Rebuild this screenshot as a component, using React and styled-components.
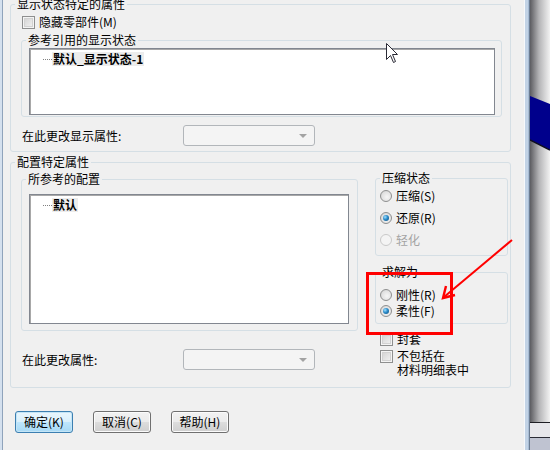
import React from "react";
import styled, { createGlobalStyle, css } from "styled-components";

const GlobalStyle = createGlobalStyle`
  html, body {
    margin: 0;
    padding: 0;
    background: #f0f0f0;
    overflow: hidden;
  }
  body {
    font-family: "Noto Sans CJK SC", "Noto Sans", sans-serif;
    font-size: 12px;
    color: #000;
  }
`;

function App() {
  return (
    <>
      <GlobalStyle />
      <Screen>
        <LeftEdge />
        <Dialog>
          <Group $top={-3}>
            <Legend>显示状态特定的属性</Legend>
            <GroupBody $pad="4px 8px 5px 10px">
              <CheckRow>
                <CheckBox />
                <span>隐藏零部件(M)</span>
              </CheckRow>
              <SubGroup $top={4}>
                <Legend>参考引用的显示状态</Legend>
                <ListBox $height={67} $margin="1px 6px 1px 7px">
                  <TreeItem>
                    <Dots />
                    <ItemText>默认_显示状态-1</ItemText>
                  </TreeItem>
                </ListBox>
              </SubGroup>
              <FieldRow $top={8}>
                <FieldLabel>在此更改显示属性:</FieldLabel>
                <Combo>
                  <ComboArrow />
                </Combo>
              </FieldRow>
            </GroupBody>
          </Group>

          <Group $top={3}>
            <Legend>配置特定属性</Legend>
            <Columns>
              <div>
                <SubGroup $top={3}>
                  <Legend>所参考的配置</Legend>
                  <ListBox $height={130} $margin="8px 8px 6px 7px">
                    <TreeItem>
                      <Dots />
                      <ItemText>默认</ItemText>
                    </TreeItem>
                  </ListBox>
                </SubGroup>
                <FieldRow $top={18}>
                  <FieldLabel>在此更改属性:</FieldLabel>
                  <Combo>
                    <ComboArrow />
                  </Combo>
                </FieldRow>
              </div>
              <div>
                <SubGroup $top={2}>
                  <Legend>压缩状态</Legend>
                  <OptionList $gap={8} $pad="4px 4px 8px">
                    <Option>
                      <Radio />
                      压缩(S)
                    </Option>
                    <Option>
                      <Radio $checked />
                      还原(R)
                    </Option>
                    <Option $disabled>
                      <Radio $disabled />
                      轻化
                    </Option>
                  </OptionList>
                </SubGroup>
                <SubGroup $top={9}>
                  <Legend>求解为</Legend>
                  <OptionList $gap={2} $pad="9px 4px 5px">
                    <Option>
                      <Radio />
                      刚性(R)
                    </Option>
                    <Option>
                      <Radio $checked />
                      柔性(F)
                    </Option>
                  </OptionList>
                </SubGroup>
                <CheckList>
                  <CheckRow>
                    <CheckBox />
                    <span>封套</span>
                  </CheckRow>
                  <CheckRow>
                    <CheckBox />
                    <span>
                      不包括在
                      <br />
                      材料明细表中
                    </span>
                  </CheckRow>
                </CheckList>
              </div>
            </Columns>
          </Group>

          <ButtonRow>
            <Button $default>确定(K)</Button>
            <Button>取消(C)</Button>
            <Button>帮助(H)</Button>
          </ButtonRow>
        </Dialog>
        <WindowEdge />
        <Viewport>
          <svg width="20" height="450" viewBox="0 0 20 450">
            <defs>
              <linearGradient id="vpg" x1="0" x2="1" y1="0" y2="0">
                <stop offset="0" stopColor="#5c5c60" />
                <stop offset="0.45" stopColor="#b4b4b6" />
                <stop offset="1" stopColor="#f2f2f2" />
              </linearGradient>
            </defs>
            <rect width="20" height="450" fill="url(#vpg)" />
            <polygon points="0,96 20,104 20,150 0,140" fill="#00008c" />
            <line x1="0" y1="140" x2="20" y2="150" stroke="#101020" strokeWidth="1.5" />
            <rect y="422" width="20" height="15" fill="#e6e6ea" />
            <rect y="437" width="20" height="13" fill="#bfc3d1" />
            <line x1="0" y1="422.5" x2="20" y2="422.5" stroke="#1e1e24" />
            <line x1="0" y1="437.5" x2="20" y2="437.5" stroke="#2a2a34" />
          </svg>
        </Viewport>

        <Highlight />
        <ArrowMark width="82" height="72" viewBox="0 0 82 72">
          <line x1="76" y1="6" x2="8" y2="63" stroke="#ff0000" strokeWidth="2" />
          <polyline points="10,52 7,64 19,61" fill="none" stroke="#ff0000" strokeWidth="2.4" />
        </ArrowMark>
        <Cursor width="13" height="21" viewBox="0 0 13 21">
          <path
            d="M0.5,0.5 L0.5,16.5 L4.5,12.5 L7.5,19.5 L9.5,18.5 L6.5,11.5 L11.5,11.5 Z"
            fill="#fff"
            stroke="#2a2a35"
            strokeWidth="1"
          />
        </Cursor>
      </Screen>
    </>
  );
}

const Screen = styled.div`
  position: relative;
  display: flex;
  width: 550px;
  height: 450px;
  overflow: hidden;
`;

const LeftEdge = styled.div`
  width: 3px;
  flex: none;
  background: linear-gradient(to right, #d4e0ee 0 2px, #8fa3bb 2px 3px);
`;

const Dialog = styled.div`
  width: 521px;
  flex: none;
  box-sizing: border-box;
  padding: 0 13px 0 7px;
  display: flex;
  flex-direction: column;
`;

const WindowEdge = styled.div`
  width: 6px;
  flex: none;
  background: linear-gradient(
    to right,
    #f7f9fc 0 1px,
    #c2d3e6 1px 4px,
    #a8bcd4 4px 5px,
    #6c7d93 5px 6px
  );
`;

const Viewport = styled.div`
  width: 20px;
  flex: none;
  svg {
    display: block;
  }
`;

const groupBox = css`
  margin: 0;
  padding: 0;
  min-width: 0;
  border: 1px solid #d5dfe5;
  border-radius: 3px;
`;

const Group = styled.fieldset`
  ${groupBox};
  margin-top: ${(p) => p.$top}px;
`;

const SubGroup = styled.fieldset`
  ${groupBox};
  margin-top: ${(p) => p.$top}px;
`;

const Legend = styled.legend`
  margin-left: 4px;
  padding: 0 2px;
  height: 14px;
  line-height: 14px;
  font-size: 12px;
`;

const GroupBody = styled.div`
  padding: ${(p) => p.$pad};
`;

const CheckRow = styled.div`
  display: flex;
  align-items: flex-start;
  gap: 4px;
  padding-left: 1px;
  line-height: 14px;
`;

const CheckBox = styled.span`
  flex: none;
  width: 13px;
  height: 13px;
  box-sizing: border-box;
  margin-top: 1px;
  border: 1px solid #8e8f8f;
  background: linear-gradient(135deg, #cfcfcf, #f6f6f6);
  box-shadow: inset 0 0 0 1px #f4f4f4, inset 0 0 0 2px #d2d2d2;
`;

const ListBox = styled.div`
  height: ${(p) => p.$height}px;
  margin: ${(p) => p.$margin};
  box-sizing: border-box;
  background: #fff;
  border: 1px solid #828790;
  box-shadow: inset 1px 1px 0 #a8a8a8;
  padding: 3px 0 0 13px;
`;

const TreeItem = styled.div`
  display: flex;
  align-items: center;
  height: 14px;
`;

const Dots = styled.span`
  width: 9px;
  height: 0;
  border-top: 1px dotted #808080;
`;

const ItemText = styled.span`
  font-weight: bold;
  line-height: 14px;
  padding: 0 1px;
  background: #ececec;
`;

const FieldRow = styled.div`
  display: grid;
  grid-template-columns: 162px 132px;
  align-items: center;
  margin-top: ${(p) => p.$top}px;
`;

const FieldLabel = styled.span`
  padding-left: 1px;
  line-height: 14px;
`;

const Combo = styled.div`
  position: relative;
  height: 21px;
  box-sizing: border-box;
  border: 1px solid #b2b6ba;
  border-radius: 3px;
  background: #f4f4f4;
`;

const ComboArrow = styled.span`
  position: absolute;
  right: 7px;
  top: 8px;
  width: 0;
  height: 0;
  border-left: 4px solid transparent;
  border-right: 4px solid transparent;
  border-top: 4px solid #a3a3a3;
`;

const Columns = styled.div`
  display: grid;
  grid-template-columns: 337px 133px;
  column-gap: 17px;
  padding: 0 2px 10px 10px;
`;

const OptionList = styled.div`
  display: flex;
  flex-direction: column;
  gap: ${(p) => p.$gap}px;
  padding: ${(p) => p.$pad};
`;

const Option = styled.div`
  display: flex;
  align-items: center;
  gap: 4px;
  height: 14px;
  line-height: 14px;
  color: ${(p) => (p.$disabled ? "#a3a3a3" : "#000")};
`;

const Radio = styled.span`
  position: relative;
  flex: none;
  width: 12px;
  height: 12px;
  box-sizing: border-box;
  border-radius: 50%;
  border: 1px solid ${(p) => (p.$disabled ? "#c9c9c9" : "#8e8f8f")};
  background: ${(p) =>
    p.$disabled
      ? "#f4f4f4"
      : "radial-gradient(circle at 60% 60%, #f6f6f6 0, #e3e3e3 55%, #cdcdcd 100%)"};
  ${(p) =>
    p.$checked &&
    css`
      &::after {
        content: "";
        position: absolute;
        left: 2px;
        top: 2px;
        width: 6px;
        height: 6px;
        border-radius: 50%;
        background: radial-gradient(circle at 35% 35%, #9fe0ff 0, #2a8ac8 45%, #0c4a78 100%);
      }
    `}
`;

const CheckList = styled.div`
  display: flex;
  flex-direction: column;
  gap: 3px;
  margin-top: 8px;
  padding-left: 4px;
`;

const ButtonRow = styled.div`
  display: flex;
  gap: 20px;
  margin: 23px 0 0 5px;
`;

const Button = styled.div`
  width: 58px;
  height: 22px;
  box-sizing: border-box;
  display: flex;
  align-items: center;
  justify-content: center;
  border-radius: 3px;
  border: 1px solid ${(p) => (p.$default ? "#3c7fb1" : "#707070")};
  background: ${(p) =>
    p.$default
      ? "linear-gradient(#eaf6fd 0%, #d9f0fc 50%, #bee6fd 50%, #a7d9f5 100%)"
      : "linear-gradient(#f2f2f2 0%, #ebebeb 50%, #dddddd 50%, #cfcfcf 100%)"};
  box-shadow: inset 0 0 0 1px ${(p) => (p.$default ? "#c4e5f6" : "#fbfbfb")};
  line-height: 14px;
`;

const Highlight = styled.div`
  position: absolute;
  left: 366px;
  top: 272px;
  width: 87px;
  height: 63px;
  box-sizing: border-box;
  border: 3px solid #ff0000;
  pointer-events: none;
`;

const ArrowMark = styled.svg`
  position: absolute;
  left: 436px;
  top: 234px;
  overflow: visible;
`;

const Cursor = styled.svg`
  position: absolute;
  left: 386px;
  top: 43px;
`;

export default App;
